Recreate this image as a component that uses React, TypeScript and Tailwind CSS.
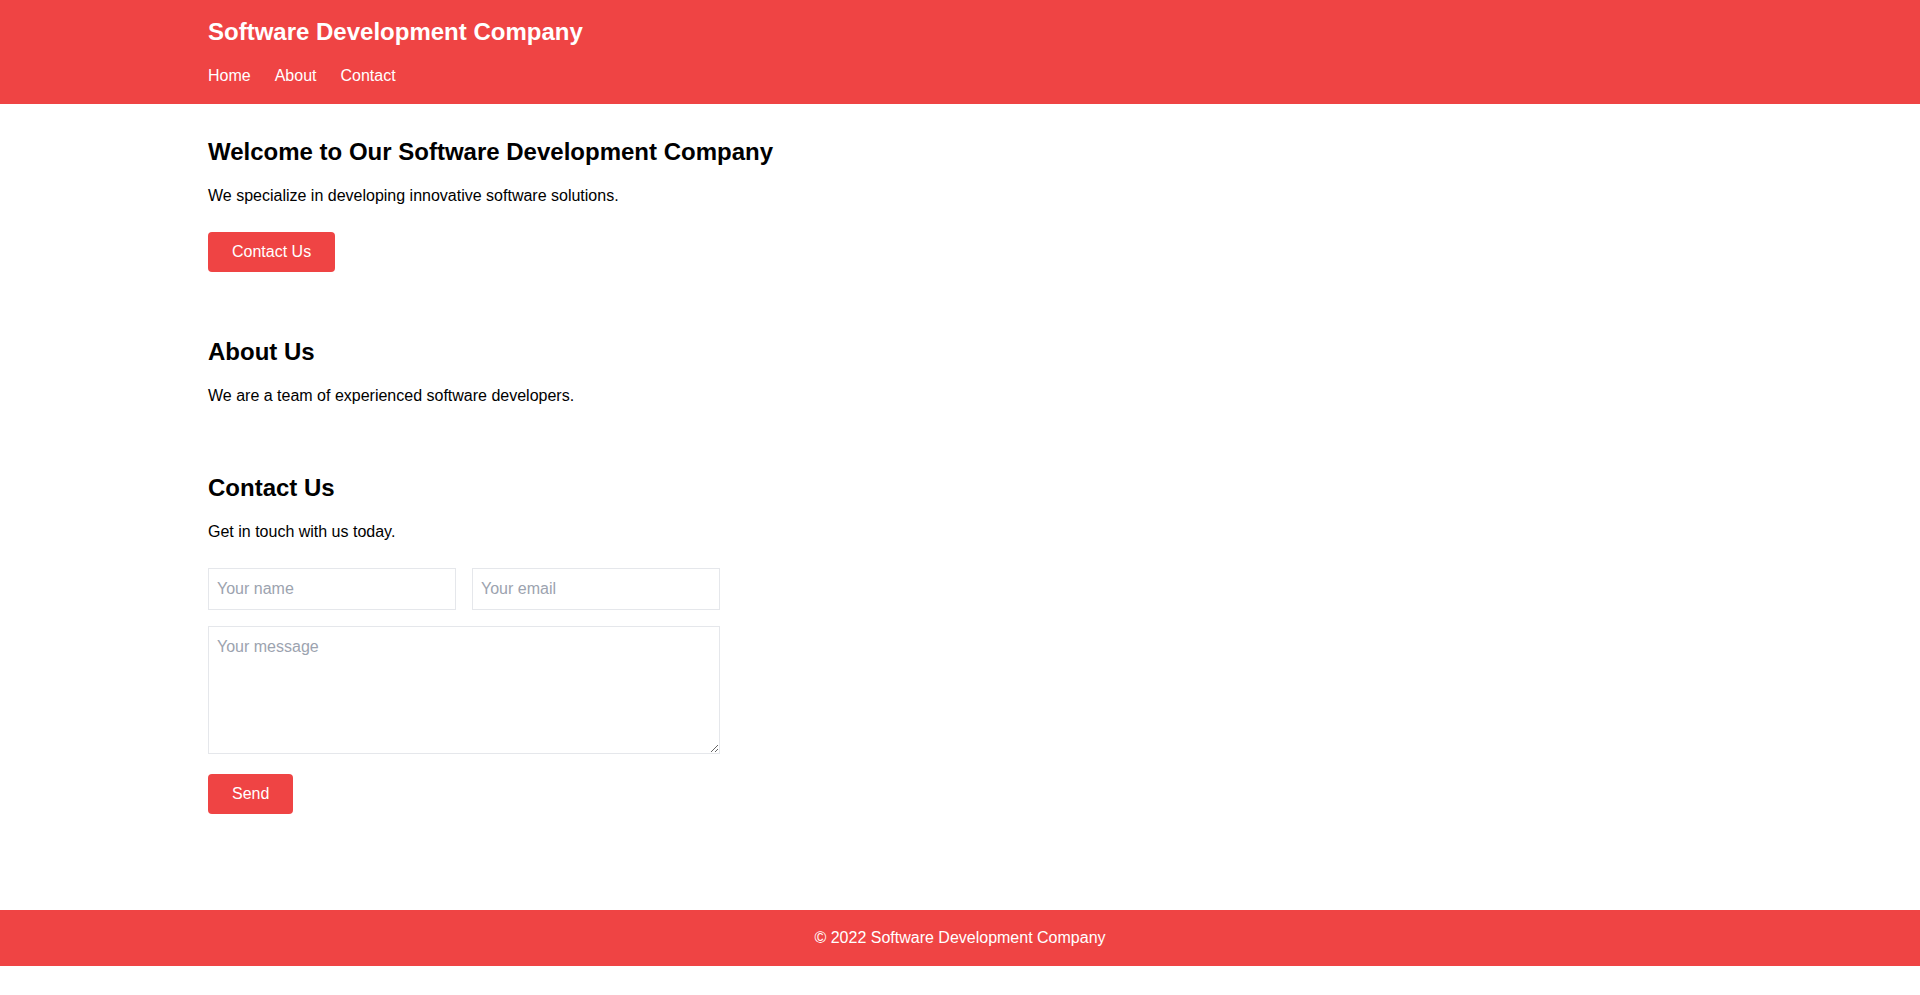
import React from "react";

export default function App() {
  return (
    <div className="min-h-[995px] bg-white text-black" style={{ fontFamily: '"Liberation Sans", Arial, Helvetica, sans-serif' }}>
      <header className="bg-[#ef4444] text-white">
        <div className="container mx-auto px-4 py-4">
          <h1 className="text-2xl leading-8 font-bold mb-4">Software Development Company</h1>
          <nav className="flex gap-6 text-base leading-6">
            <a href="#" className="text-white">Home</a>
            <a href="#" className="text-white">About</a>
            <a href="#" className="text-white">Contact</a>
          </nav>
        </div>
      </header>

      <main className="container mx-auto px-4 pt-8 pb-8">
        <section className="mb-16">
          <h2 className="text-2xl leading-8 font-bold mb-4">Welcome to Our Software Development Company</h2>
          <p className="text-base leading-6 mb-6">We specialize in developing innovative software solutions.</p>
          <button className="bg-[#ef4444] text-white px-6 py-2 rounded text-base leading-6">Contact Us</button>
        </section>

        <section className="mb-16">
          <h2 className="text-2xl leading-8 font-bold mb-4">About Us</h2>
          <p className="text-base leading-6">We are a team of experienced software developers.</p>
        </section>

        <section className="mb-16">
          <h2 className="text-2xl leading-8 font-bold mb-4">Contact Us</h2>
          <p className="text-base leading-6 mb-6">Get in touch with us today.</p>
          <form className="max-w-lg" onSubmit={(e) => e.preventDefault()}>
            <div className="grid grid-cols-2 gap-4 mb-4">
              <input
                type="text"
                placeholder="Your name"
                className="block w-full border border-[#e5e7eb] p-2 text-base leading-6 placeholder:text-[#9ca3af] outline-none"
              />
              <input
                type="email"
                placeholder="Your email"
                className="block w-full border border-[#e5e7eb] p-2 text-base leading-6 placeholder:text-[#9ca3af] outline-none"
              />
            </div>
            <textarea
              placeholder="Your message"
              className="block w-full h-32 border border-[#e5e7eb] p-2 text-base leading-6 placeholder:text-[#9ca3af] outline-none"
            />
            <button type="submit" className="mt-5 bg-[#ef4444] text-white px-6 py-2 rounded text-base leading-6">Send</button>
          </form>
        </section>
      </main>

      <footer className="bg-[#ef4444] text-white py-4 text-center text-base leading-6">
        © 2022 Software Development Company
      </footer>
    </div>
  );
}
